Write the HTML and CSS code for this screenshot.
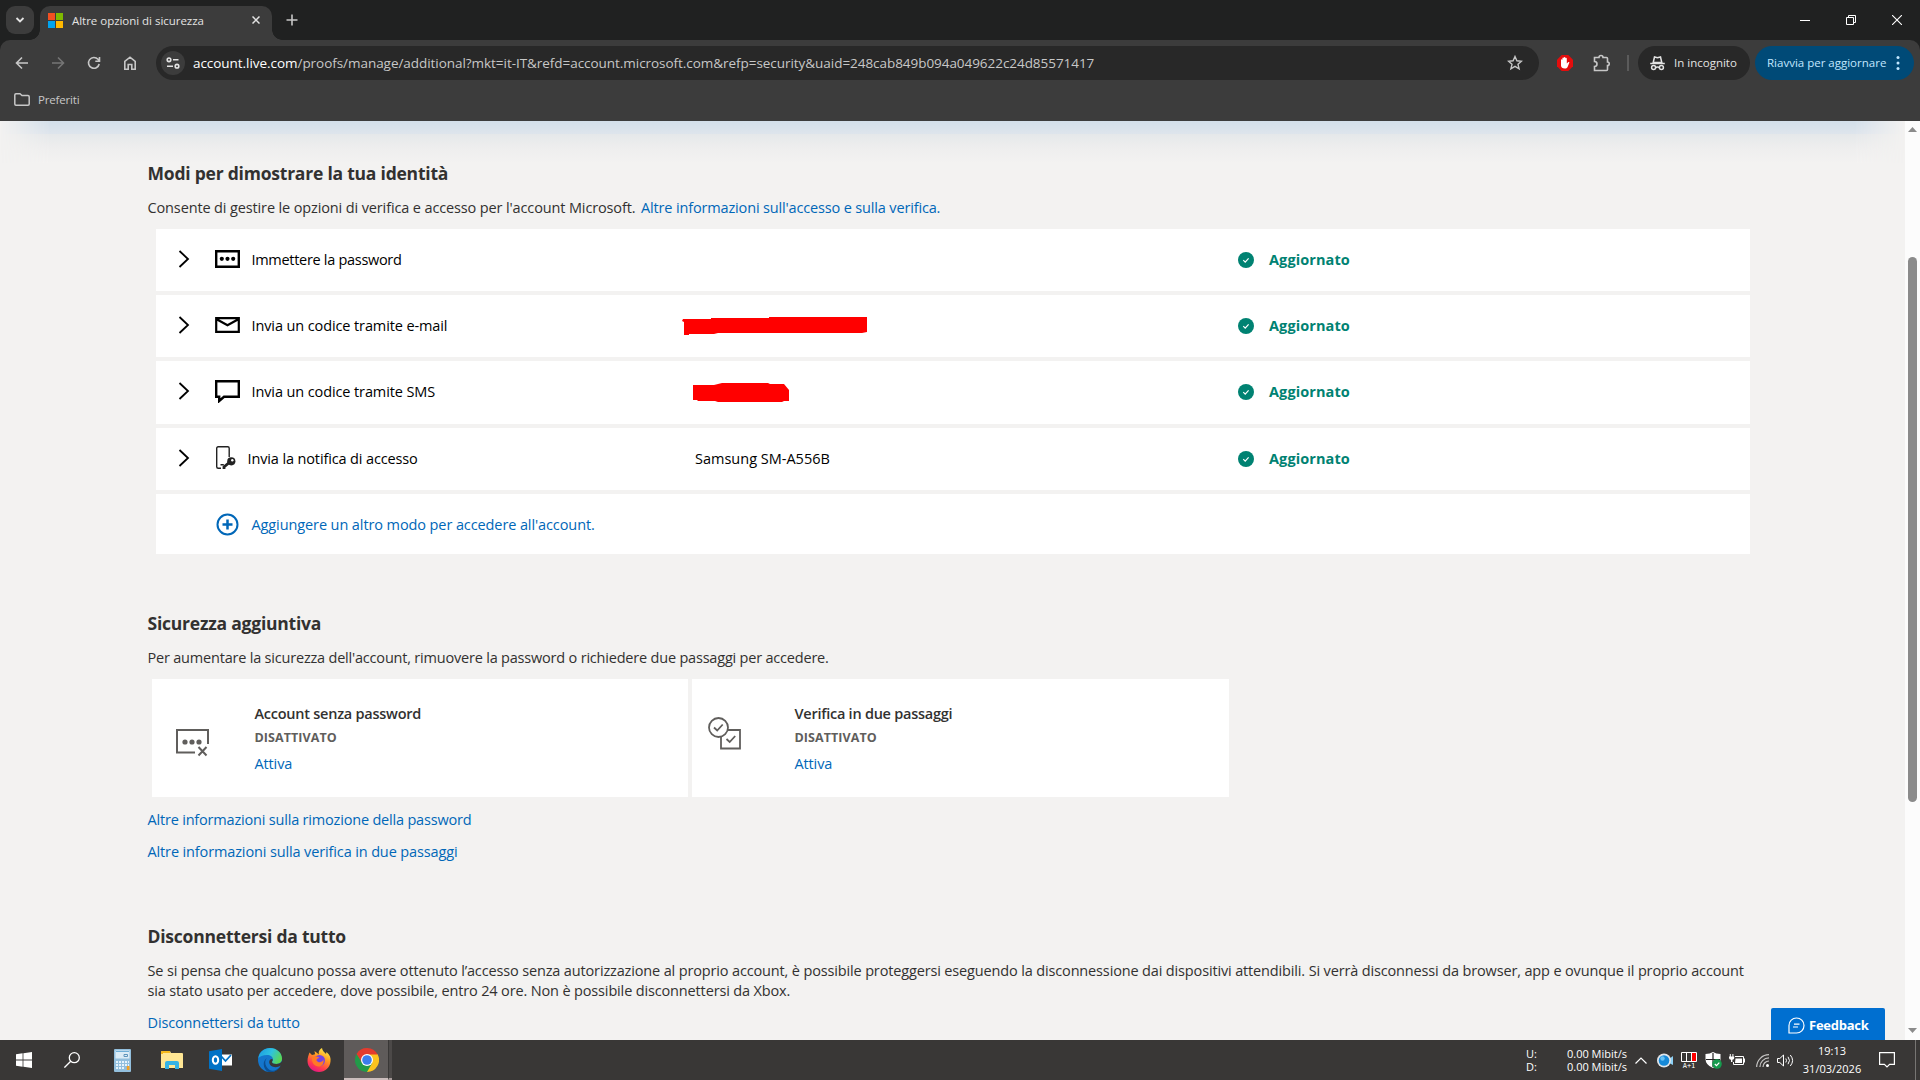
FILE: index.html
```html
<!DOCTYPE html>
<html lang="it">
<head>
<meta charset="utf-8">
<title>Altre opzioni di sicurezza</title>
<link rel="stylesheet" href="styles.css">
</head>
<body>
<header class="browser">
  <div class="tabstrip">
    <div class="tab-search"><svg width="10" height="10" viewBox="0 0 10 10"><path d="M1.5 3 5 6.5 8.500 3" fill="none" stroke="#e3e3e3" stroke-width="1.8"/></svg></div>
    <div class="tab">
      <svg class="favicon" width="15" height="15" viewBox="0 0 15 15"><path fill="#f25022" d="M0 0h7v7H0z"/><path fill="#7fba00" d="M8 0h7v7H8z"/><path fill="#00a4ef" d="M0 8h7v7H0z"/><path fill="#ffb900" d="M8 8h7v7H8z"/></svg>
      <span class="tab-title">Altre opzioni di sicurezza</span>
      <svg width="8" height="8" viewBox="0 0 8 8"><path d="M.5.5l7 7m0-7-7 7" stroke="#e3e3e3" stroke-width="1.5"/></svg>
    </div>
    <svg class="new-tab" width="12" height="12" viewBox="0 0 12 12"><path d="M6 .5v11M.5 6h11" stroke="#c7c7c7" stroke-width="1.6"/></svg>
    <div class="window-controls">
      <svg width="10" height="10" viewBox="0 0 10 10"><path d="M0 5.500h10" stroke="#fff"/></svg>
      <svg width="10" height="10" viewBox="0 0 10 10"><path d="M.5 2.500h7v7h-7zM2.500 2.500v-2h7v7h-2" fill="none" stroke="#fff"/></svg>
      <svg width="10" height="10" viewBox="0 0 10 10"><path d="M0 0l10 10M10 0 0 10" stroke="#fff" stroke-width="1.100"/></svg>
    </div>
  </div>
  <div class="toolbar">
    <div class="nav">
      <svg width="14" height="14" viewBox="0 0 14 14"><path d="M7 1.500 1.500 7 7 12.500M1.500 7H13" fill="none" stroke="#c7c7c7" stroke-width="1.600"/></svg>
      <svg width="14" height="14" viewBox="0 0 14 14"><path d="M7 1.500 12.500 7 7 12.500M12.500 7H1" fill="none" stroke="#757575" stroke-width="1.600"/></svg>
      <svg width="14" height="14" viewBox="0 0 14 14"><path d="M12.200 8A5.400 5.400 0 1 1 11 3.300L12.400 5M12.500 1v4.300H8.300" fill="none" stroke="#c7c7c7" stroke-width="1.600"/></svg>
      <svg width="14" height="14" viewBox="0 0 14 14"><path d="M1.800 13.200V5.500L7 1.200l5.200 4.300v7.700H8.800V8.500H5.200v4.700z" fill="none" stroke="#c7c7c7" stroke-width="1.600"/></svg>
    </div>
    <div class="omnibox">
      <div class="site-info"><svg width="14" height="12" viewBox="0 0 14 12"><g fill="none" stroke="#e3e3e3" stroke-width="1.600"><circle cx="3" cy="2.800" r="1.800"/><path d="M7 2.800h5.500M1 9.200h6"/><circle cx="11" cy="9.200" r="1.800"/></g></svg></div>
      <span class="url"><b>account.live.com</b>/proofs/manage/additional?mkt=it-IT&amp;refd=account.microsoft.com&amp;refp=security&amp;uaid=248cab849b094a049622c24d85571417</span>
      <svg width="16" height="16" viewBox="0 0 16 16"><path d="m8 1.500 1.900 4.300 4.600.4-3.500 3.100 1.100 4.600L8 11.400l-4.100 2.500L5 9.300 1.500 6.200l4.600-.4z" fill="none" stroke="#c7c7c7" stroke-width="1.400"/></svg>
    </div>
    <svg class="adblock" width="16" height="16" viewBox="0 0 16 16"><path d="M4.700 0h6.600L16 4.700v6.600L11.300 16H4.700L0 11.300V4.700z" fill="#e40d0d"/><path d="M4 8V5c0-.9 1.400-.9 1.400 0V3.200c0-.9 1.500-.9 1.500 0v-.6c0-.9 1.500-.9 1.500 0v.8c0-.9 1.400-.9 1.400 0V8.500l1.300-1.200c.8-.6 1.600 0 1.100.8L10.600 12c-.7 1.200-1.400 1.600-2.800 1.600C5.500 13.600 4 12.300 4 10.500z" fill="#fff"/></svg>
    <svg class="extensions" width="18" height="18" viewBox="0 0 18 18"><path d="M1.500 3.500H6a2 2 0 0 1 4 0h3.500q1 0 1 1V8a1.600 1.600 0 0 1 0 3.500v4q0 1-1 1h-12v-4a2.500 2.500 0 0 0 0-5z" fill="none" stroke="#c7c7c7" stroke-width="1.600"/></svg>
    <i class="divider"></i>
    <div class="pill incognito"><svg width="15" height="15" viewBox="0 0 15 15"><path d="M3.200 6.500 4.500 1l3 .8 3-.8 1.300 5.500z" fill="none" stroke="#e3e3e3" stroke-width="1.500"/><g fill="none" stroke="#e3e3e3" stroke-width="1.500"><path d="M.2 7.500h14.600M5.500 11.500q2-1 4 0"/><circle cx="3.600" cy="11.600" r="2"/><circle cx="11.400" cy="11.600" r="2"/></g></svg><span>In incognito</span></div>
    <div class="pill update"><span>Riavvia per aggiornare</span><svg width="4" height="16" viewBox="0 0 4 16" fill="#c2e7ff"><circle cx="2" cy="2.500" r="1.500"/><circle cx="2" cy="8" r="1.500"/><circle cx="2" cy="13.500" r="1.500"/></svg></div>
  </div>
  <div class="bookmarks"><svg width="16" height="13" viewBox="0 0 16 13"><path d="M.8 11V2q0-1.200 1.200-1.200h4l2 1.800h6q1.200 0 1.200 1.200V11q0 1.200-1.200 1.200H2Q.8 12.200.8 11z" fill="none" stroke="#c7c7c7" stroke-width="1.500"/></svg><span>Preferiti</span></div>
</header>

<div class="viewport">
  <main class="page">
    <h2>Modi per dimostrare la tua identità</h2>
    <p>Consente di gestire le opzioni di verifica e accesso per l'account Microsoft. <a class="more">Altre informazioni sull'accesso e sulla verifica.</a></p>

    <div class="proofs">
      <div class="proof">
        <svg class="chevron" width="12" height="18" viewBox="0 0 12 18"><path d="M1.500 1 10 9l-8.500 8"/></svg>
        <span class="label"><svg width="25" height="18" viewBox="0 0 25 18"><path d="M1.200 1.200h22.600v15.600H1.200z" fill="none" stroke="#000" stroke-width="2.400"/><circle cx="6.800" cy="8.800" r="2.100"/><circle cx="12.500" cy="8.800" r="2.100"/><circle cx="18.200" cy="8.800" r="2.100"/></svg><span class="snug">Immettere la password</span></span>
        <span class="value"></span>
        <span class="status"><svg width="16" height="16" viewBox="0 0 16 16"><circle cx="8" cy="8" r="8" fill="#008272"/><path d="m5.300 8.200 1.900 1.900 3.400-3.700" fill="none" stroke="#fff" stroke-width="1.200"/></svg>Aggiornato</span>
      </div>
      <div class="proof">
        <svg class="chevron" width="12" height="18" viewBox="0 0 12 18"><path d="M1.500 1 10 9l-8.500 8"/></svg>
        <span class="label"><svg width="25" height="16" viewBox="0 0 25 16"><path d="M1.200 1.200h22.600v13.600H1.200zM1.200 2l11.300 6.300L23.800 2" fill="none" stroke="#000" stroke-width="2.200"/></svg><span>Invia un codice tramite e-mail</span></span>
        <span class="value"><svg class="mark mark-mail" width="186" height="19" viewBox="0 0 186 19"><path d="M0 4l1-2h28V1h58V0h98v15l-5 1H36l-4 1H7v1H2V5z" fill="#f00"/></svg></span>
        <span class="status"><svg width="16" height="16" viewBox="0 0 16 16"><circle cx="8" cy="8" r="8" fill="#008272"/><path d="m5.300 8.200 1.900 1.900 3.400-3.700" fill="none" stroke="#fff" stroke-width="1.200"/></svg>Aggiornato</span>
      </div>
      <div class="proof tall">
        <svg class="chevron" width="12" height="18" viewBox="0 0 12 18"><path d="M1.500 1 10 9l-8.500 8"/></svg>
        <span class="label"><svg width="25" height="23" viewBox="0 0 25 23"><path d="M1.200 1.200h22.600v15.600H9L4.200 21v-4.200h-3z" fill="none" stroke="#000" stroke-width="2.400"/></svg><span>Invia un codice tramite SMS</span></span>
        <span class="value"><svg class="mark mark-sms" width="96" height="19" viewBox="0 0 96 19"><path d="M0 2h21l8-2h46l2 1h14l5 6v11h-5l-2 1H25l-3-1H5l-1-1H0z" fill="#f00"/></svg></span>
        <span class="status"><svg width="16" height="16" viewBox="0 0 16 16"><circle cx="8" cy="8" r="8" fill="#008272"/><path d="m5.300 8.200 1.900 1.900 3.400-3.700" fill="none" stroke="#fff" stroke-width="1.200"/></svg>Aggiornato</span>
      </div>
      <div class="proof">
        <svg class="chevron" width="12" height="18" viewBox="0 0 12 18"><path d="M1.500 1 10 9l-8.500 8"/></svg>
        <span class="label phone"><svg width="21" height="24" viewBox="0 0 21 24"><path d="M6 22.200H3.200Q1.700 22.200 1.700 20.700V2.200Q1.700.8 3.200.8h9.600Q14.200.8 14.200 2.200V11M5.500 18.800h3.300" fill="none" stroke="#222" stroke-width="1.400"/><path d="M15.800 15.300 9 21v2" fill="none" stroke="#222" stroke-width="2.800"/><circle cx="16.300" cy="15.300" r="4.100" fill="#222"/><circle cx="17.300" cy="14.300" r="1.200" fill="#fff"/></svg><span>Invia la notifica di accesso</span></span>
        <span class="value">Samsung SM-A556B</span>
        <span class="status"><svg width="16" height="16" viewBox="0 0 16 16"><circle cx="8" cy="8" r="8" fill="#008272"/><path d="m5.300 8.200 1.900 1.900 3.400-3.700" fill="none" stroke="#fff" stroke-width="1.200"/></svg>Aggiornato</span>
      </div>
      <div class="proof add">
        <span class="label"><svg width="25" height="23" viewBox="0 0 25 23"><g fill="none" stroke="#0067b8" stroke-width="2"><circle cx="12.500" cy="11.500" r="10"/><path d="M12.500 6.500v10M7.500 11.500h10" stroke-width="2.500"/></g></svg><a>Aggiungere un altro modo per accedere all'account.</a></span>
      </div>
    </div>

    <h2 class="extra">Sicurezza aggiuntiva</h2>
    <p class="intro">Per aumentare la sicurezza dell'account, rimuovere la password o richiedere due passaggi per accedere.</p>
    <div class="cards">
      <section class="card">
        <div class="card-icon no-password"><svg width="33" height="28" viewBox="0 0 33 28"><g fill="none" stroke="#605e5c" stroke-width="2"><path d="M19 23.500H1V1h31v14M22.500 18l8 8.500m0-8.500-8 8.500"/></g><g fill="#605e5c"><circle cx="9" cy="13" r="2.600"/><circle cx="16" cy="13" r="2.600"/><circle cx="23" cy="13" r="2.600"/></g></svg></div>
        <div class="card-text"><h3>Account senza password</h3><strong>DISATTIVATO</strong><a>Attiva</a></div>
      </section>
      <section class="card">
        <div class="card-icon two-step"><svg width="33" height="33" viewBox="0 0 33 33"><g fill="none" stroke="#605e5c" stroke-width="1.800"><circle cx="10.500" cy="10.500" r="9.500"/><path d="M13 20v11.500h19V13H20M6 10.500l3.200 3 5.500-6M18.500 22l3.200 3 5.500-6"/></g></svg></div>
        <div class="card-text"><h3>Verifica in due passaggi</h3><strong>DISATTIVATO</strong><a>Attiva</a></div>
      </section>
    </div>
    <p class="first-link"><a>Altre informazioni sulla rimozione della password</a></p>
    <p class="next-link"><a>Altre informazioni sulla verifica in due passaggi</a></p>

    <h2 class="signout">Disconnettersi da tutto</h2>
    <p class="long">Se si pensa che qualcuno possa avere ottenuto l’accesso senza autorizzazione al proprio account, è possibile proteggersi eseguendo la disconnessione dai dispositivi attendibili. Si verrà disconnessi da browser, app e ovunque il proprio account<br>sia stato usato per accedere, dove possibile, entro 24 ore. Non è possibile disconnettersi da Xbox.</p>
    <p class="next-link"><a>Disconnettersi da tutto</a></p>
  </main>
  <div class="scrollbar">
    <svg width="9" height="5" viewBox="0 0 9 5"><path d="M4.500 0 9 5H0z" fill="#8b8b8b"/></svg>
    <i class="thumb"></i>
    <svg width="9" height="5" viewBox="0 0 9 5"><path d="M0 0h9L4.500 5z" fill="#8b8b8b"/></svg>
  </div>
  <button class="feedback"><svg width="17" height="17" viewBox="0 0 17 17"><g fill="none" stroke="#fff" stroke-width="1.200"><path d="M1 16v-7.500A7.500 7.500 0 1 1 8.500 16zM6 7.200h5.500M5 10h5"/></g></svg>Feedback</button>
</div>

<footer class="taskbar">
  <div class="task"><svg width="16" height="16" viewBox="0 0 16 16" fill="#fff"><path d="M0 2.200 6.600 1.300v6.300H0zM7.400 1.200 16 0v7.600H7.400zM0 8.400h6.600v6.300L0 13.800zM7.400 8.400H16V16l-8.600-1.200z"/></svg></div>
  <div class="task search"><svg width="16" height="16" viewBox="0 0 16 16"><g fill="none" stroke="#fff" stroke-width="1.300"><circle cx="10.300" cy="5.700" r="5"/><path d="M6.700 9.300.4 15.600"/></g></svg></div>
  <div class="task app"><svg width="17" height="23" viewBox="0 0 17 23"><rect width="17" height="23" rx="1" fill="#93bfdd"/><path d="M1.500 1.500h14v8h-14z" fill="#dcecf6"/><path d="M2 2.500h13" stroke="#6faed6"/><path d="M10 5.500h3.500v2H10z" fill="none" stroke="#5e94bb"/><path d="M2 13h13M2 16h13M2 19h9" stroke="#e6f3fb" stroke-width="2" stroke-dasharray="2 1"/><path d="M12.800 17h2.700v4h-2.700z" fill="#f3a021"/></svg></div>
  <div class="task app"><svg width="22" height="18" viewBox="0 0 22 18"><path d="M0 1q0-1 1-1h8l1 2h11q1 0 1 1v14H0z" fill="#ffe694"/><path d="M0 1q0-1 1-1h8v2H2v1H0z" fill="#f5b91c"/><path d="M4 18v-6q0-2 2-2h10q2 0 2 2v6h-4v-4H8v4z" fill="#35b3e5"/></svg></div>
  <div class="task app"><svg width="23" height="22" viewBox="0 0 23 22"><path d="M11 5.500h12v11H11z" fill="#fff"/><path d="M12 7l4.500 5L22 6" fill="none" stroke="#0072c6" stroke-width="1.800"/><path d="M0 2.200 13 0v22L0 19.800z" fill="#0072c6"/><ellipse cx="6.500" cy="11" rx="2.700" ry="3.800" fill="none" stroke="#fff" stroke-width="2"/></svg></div>
  <div class="task app"><svg width="24" height="24" viewBox="0 0 24 24"><defs><linearGradient id="edgeTop" x1="0" x2="1" y1=".2" y2=".6"><stop stop-color="#1b9de2"/><stop offset=".5" stop-color="#2fc2df"/><stop offset="1" stop-color="#5bd84f"/></linearGradient></defs><circle cx="12" cy="12" r="12" fill="#1476cc"/><path d="M.3 10C1.500 3.800 6.200 0 12 0c7 0 12 5 12 10.600 0 3.400-2.300 5.400-5.600 5.400-3 0-4.400-1-4.400-2 0-.7 1-1.200 1-2.700C15 9 12.500 7 9 7 5 7 1.500 8.500.3 10z" fill="url(#edgeTop)"/><path d="M9 10c-3 3-2 8.500 2 11.500 3 2 7 2 11.300-3.200C20 23 15 25 10 23.700 5 21 4 13 9 10z" fill="#0b4f93"/><path d="M13.500 11c-3.300 1-3 5.600.8 7.500 3 1.300 6 .7 8.200-.7l1.500.2v-5c-1 2-3 3-5.600 3-3 0-4.400-1-4.400-2 0-.7 1-1.500.8-2.500z" fill="#393736"/></svg></div>
  <div class="task app"><svg width="24" height="24" viewBox="0 0 24 24"><defs><linearGradient id="fox" x1=".8" x2=".3" y1="0" y2="1"><stop stop-color="#fff44f"/><stop offset=".4" stop-color="#ff9a1f"/><stop offset=".75" stop-color="#ff3b4e"/><stop offset="1" stop-color="#e31587"/></linearGradient></defs><path d="M2.500 4.500 5 7l3-.8L7.500 3 12 6.500c-1-3 1-5.500 3-6.500.3 3 2 3.500 4 6l.5-2C23 7 24 10 23.500 13.500 23 19.500 18 24 12 24S.5 19.500.5 13c0-3.500 1-6 2-8.500z" fill="url(#fox)"/><circle cx="12.500" cy="12.500" r="5.500" fill="#7543e3"/><path d="M5 9.500c3-1.500 6-1 7.500.5-2 .3-3 1-3 2.500 2 3 5.500 2 7-1 .5 5-2 7-5 7-4 0-7-3.500-6.500-9z" fill="#ff7a25"/></svg></div>
  <div class="task app active"><svg width="24" height="24" viewBox="0 0 24 24"><path d="M12 12V6h10.400A12 12 0 0 1 12 24z" fill="#fcc31e"/><path d="M12 12 1.600 6A12 12 0 0 0 12 24l5.200-9z" fill="#229a49"/><path d="M12 6.500h10.600A12 12 0 0 0 1.600 6l5.600 9z" fill="#e33b2e"/><circle cx="12" cy="12" r="6" fill="#fff"/><circle cx="12" cy="12" r="4.800" fill="#3b7ded"/></svg></div>
  <i class="stack"></i>

  <div class="tray">
    <div class="net"><span>U:</span><span>0.00 Mibit/s</span><span>D:</span><span>0.00 Mibit/s</span></div>
    <svg class="caret" width="12" height="7" viewBox="0 0 12 7"><path d="M.5 6.500 6 1l5.500 5.500" fill="none" stroke="#fff" stroke-width="1.200"/></svg>
    <svg class="cam" width="16" height="15" viewBox="0 0 16 15"><path d="M12 6l4-3v9l-4-2z" fill="#8cd0f5"/><circle cx="7" cy="7.500" r="7" fill="#e1e5e9"/><circle cx="7" cy="7.500" r="5.300" fill="#1689d8"/><circle cx="5.500" cy="5.500" r="2.200" fill="#69c2f3"/></svg>
    <div class="caps"><svg width="16" height="10" viewBox="0 0 16 10"><path d="M.5.5h15v9H.5zM5.500.5v9M10.500.5v9" fill="none" stroke="#fff"/><path d="M11 1h4v8h-4z" fill="#f00"/></svg><span>A+1</span></div>
    <svg class="shield" width="17" height="17" viewBox="0 0 17 17"><path d="M8 0q3 2 7.500 2v5q0 6-7.500 9Q.5 13 .5 7V2Q5 2 8 0z" fill="#fff"/><path d="M8 1v14M1 7.500h14" stroke="#222" stroke-width="1.200"/><circle cx="12" cy="12" r="4.800" fill="#169b4e"/><path d="m9.800 12 1.700 1.600 2.800-3" fill="none" stroke="#fff" stroke-width="1.200"/></svg>
    <svg class="battery" width="16" height="12" viewBox="0 0 16 12"><path d="M6 2.500h8.500v8h-10V8" fill="none" stroke="#fff"/><path d="M6.500 4.500H13V9H6zM15 4.500h1v4h-1zM.8 0h1v2.500h1.600V0h1v2.500h.8V4q0 1.500-1.800 1.800V8H2V5.800Q0 5.500 0 4V2.500h.8z" fill="#fff"/></svg>
    <svg class="wifi" width="13" height="13" viewBox="0 0 13 13"><g fill="none" stroke="#c6c5c4" stroke-width="1.200"><path d="M.7 13A12.300 12.300 0 0 1 13 .7M3.900 13A9.100 9.100 0 0 1 13 3.900M7 13a6 6 0 0 1 6-6"/></g><circle cx="11.500" cy="11.500" r="1.500" fill="#fff"/></svg>
    <svg class="speaker" width="17" height="13" viewBox="0 0 17 13"><path d="M.5 4.500h2.300L6.500 1v11L2.800 8.500H.5zM8.800 4.500q1.400 2 0 4M11 2.800q3 3.700 0 7.400M13.300 1q4.600 5.500 0 11" fill="none" stroke="#fff"/></svg>
    <div class="clock"><span>19:13</span><span>31/03/2026</span></div>
    <svg class="notes" width="16" height="16" viewBox="0 0 16 16"><path d="M.6.600h14.800v11.800h-4.800L8 15l-2.600-2.600H.6z" fill="none" stroke="#fff" stroke-width="1.200"/></svg>
    <i class="peek"></i>
  </div>
</footer>
</body>
</html>
```
FILE: styles.css
```css
* { box-sizing: border-box; }
body {
  margin: 0;
  width: 1920px;
  height: 1080px;
  overflow: hidden;
  display: flex;
  flex-direction: column;
  font-family: "Open Sans", "Noto Sans", sans-serif;
}
svg { display: block; flex: none; }
i { flex: none; }
span, a, h2, h3, strong { white-space: nowrap; }

/* Browser chrome */
.browser { height: 121px; flex: none; background: #202121; color: #e3e3e3; font-size: 11.5px; }
.tabstrip { height: 40px; display: flex; align-items: center; padding-left: 6px; }
.tab-search { width: 28px; height: 28px; border-radius: 9px; background: #3c3c3c; display: grid; place-items: center; }
.tab {
  position: relative;
  align-self: flex-end;
  width: 232px; height: 34px; margin-left: 6px; padding: 0 12px 6px 8px;
  display: flex; align-items: center;
  background: #3c3c3c; border-radius: 10px 10px 0 0;
}
.tab::before, .tab::after { content: ""; position: absolute; bottom: 0; width: 10px; height: 10px; }
.tab::before { right: 100%; background: radial-gradient(circle at 0 0, transparent 9.5px, #3c3c3c 10px); }
.tab::after { left: 100%; background: radial-gradient(circle at 100% 0, transparent 9.5px, #3c3c3c 10px); }
.tab-title { flex: 1; margin-left: 9px; letter-spacing: -0.03px; }
.new-tab { margin-left: 14px; }
.window-controls { margin-left: auto; margin-right: 18px; display: flex; gap: 36px; }
.toolbar { height: 46px; background: #3c3c3c; border-radius: 10px 10px 0 0; display: flex; align-items: center; padding: 0 6px 0 15px; }
.nav { display: flex; gap: 22px; width: 141px; }
.omnibox { width: 1383px; height: 34px; border-radius: 17px; background: #282828; display: flex; align-items: center; padding: 0 16px 0 5px; }
.site-info { width: 24px; height: 24px; border-radius: 50%; background: #3c3c3c; display: grid; place-items: center; }
.url { flex: 1; margin-left: 8px; font-size: 13.5px; letter-spacing: -0.047px; color: #c7c7c7; }
.url b { font-weight: 400; color: #fff; }
.adblock { margin-left: 18px; }
.extensions { margin-left: 20px; }
.divider { width: 2px; height: 16px; margin-left: 16px; background: #5b5b5b; }
.pill { height: 34px; border-radius: 17px; display: flex; align-items: center; }
.pill span { margin-top: -1px; }
.incognito { width: 112px; margin-left: 9px; padding-left: 12px; gap: 9px; background: #282828; }
.update { width: 159px; margin-left: 5px; padding: 0 14px 0 12px; justify-content: space-between; background: #004a77; color: #c2e7ff; }
.bookmarks { height: 35px; background: #3c3c3c; padding: 0 0 8px 14px; display: flex; align-items: center; gap: 8px; color: #c7c7c7; letter-spacing: -0.17px; }

/* Account page */
.viewport { position: relative; height: 919px; flex: none; display: flex; background: #f3f2f1; }
.page {
  width: 1905px; height: 919px; overflow: hidden; padding: 40px 155px 0 147.5px;
  font-size: 14.5px; line-height: 20px; letter-spacing: -0.13px; color: #323130;
}
.page::before {
  content: ""; position: absolute; left: 0; top: 0; width: 1905px; height: 42px;
  background: linear-gradient(#d3dfea, #dee5ec 13px, #e5e8ea 13px, #eeeeee 27px, #f3f2f1);
  -webkit-mask-image: linear-gradient(90deg, transparent, #000 50px, #000 1855px, transparent);
  mask-image: linear-gradient(90deg, transparent, #000 50px, #000 1855px, transparent);
}
h2, h3, p { margin: 0; }
h2 { font-size: 17.5px; line-height: 24px; font-weight: 700; letter-spacing: -0.22px; }
p { margin-top: 13px; }
a { color: #0067b8; }
.more { margin-left: 2px; letter-spacing: -0.155px; }
.proofs { width: 1594px; margin: 11px 0 0 8.5px; display: flex; flex-direction: column; gap: 4px; color: #000; }
.proof { height: 62px; display: grid; grid-template-columns: 37px 480px 543px 1fr; align-items: center; padding-left: 22px; background: #fff; }
.proof.tall { height: 63px; padding-bottom: 1px; }
.proof.add { height: 60px; grid-template-columns: 1fr; padding: 2px 0 0 59px; }
.add .label { letter-spacing: -0.1px; }
.add .label > svg { margin-top: -1px; }
.chevron { fill: none; stroke: #000; stroke-width: 1.8; margin-top: -2px; }
.label { display: flex; align-items: center; gap: 11.5px; letter-spacing: -0.11px; }
.label > svg { margin-top: -2px; }
.label.phone { gap: 11.5px; letter-spacing: -0.13px; }
.snug { letter-spacing: -0.3px; }
.value { position: relative; letter-spacing: 0; }
.mark { position: absolute; }
.mark-mail { left: -13px; top: -9px; }
.mark-sms { left: -2px; top: -9px; }
.status { display: flex; align-items: center; gap: 15px; font-weight: 700; color: #008272; letter-spacing: 0.1px; }
.extra { margin-top: 57px; }
.intro { letter-spacing: -0.2px; }
.cards { display: flex; gap: 4px; margin: 11px 0 0 4.5px; }
.card { width: 536.5px; height: 118px; display: flex; background: #fff; }
.card:first-child { width: 536px; }
.card-icon { width: 102.5px; flex: none; }
.no-password { padding: 50px 0 0 23.5px; }
.two-step { padding: 38px 0 0 15.500px; }
.card-text { display: flex; flex-direction: column; padding-top: 24px; }
h3 { font-size: 14.5px; font-weight: 600; letter-spacing: -0.25px; line-height: 22px; }
.card-text strong { font-size: 12.5px; line-height: 25px; color: #605e5c; letter-spacing: 0.08px; }
.card-text a { line-height: 28px; }
.first-link { margin-top: 13px; letter-spacing: -0.19px; }
.next-link { margin-top: 12px; }
.signout { margin-top: 62px; }
.long { white-space: nowrap; letter-spacing: -0.148px; }
.scrollbar { width: 15px; height: 919px; background: #fcfcfc; display: flex; flex-direction: column; align-items: center; padding: 6px 0 7px; }
.thumb { width: 9px; height: 545px; margin: 125px 0 auto; border-radius: 5px; background: #8b8b8b; }
.feedback {
  position: absolute; right: 35px; bottom: 0; width: 114px; height: 32px; padding: 2px 0 0 17px;
  display: flex; align-items: center; gap: 4px; border: 0; border-radius: 2px 2px 0 0;
  background: #006fd0; color: #fff; font: 700 13px "Open Sans", sans-serif; letter-spacing: -0.25px;
}

/* Windows taskbar */
.taskbar { height: 40px; flex: none; display: flex; background: #393736; color: #fff; font-size: 11px; }
.task { width: 48px; display: grid; place-items: center; }
.task.search { margin-right: 2px; }
.task.app { width: 49px; }
.task.active { width: 44px; margin-left: 1px; padding: 2px 0 0 2px; background: #5f5b5a; border-bottom: 2px solid #cbbdbc; }
.stack { width: 4px; background: #4c4948; border-left: 1px solid #393736; border-bottom: 2px solid #a89c9b; }
.tray { margin-left: auto; display: flex; align-items: center; height: 40px; }
.net { width: 101px; display: grid; grid-template-columns: 41px 1fr; line-height: 13px; margin-right: 8px; }
.cam { margin-left: 10px; }
.caps { margin-left: 8px; padding-top: 2px; display: flex; flex-direction: column; align-items: center; width: 16px; font: 7px/8px "DejaVu Sans Mono", monospace; }
.shield { margin-left: 8px; }
.battery { margin-left: 7px; }
.wifi { margin-left: 11px; }
.speaker { margin-left: 8px; }
.clock { width: 60px; margin-left: 8px; display: flex; flex-direction: column; text-align: center; line-height: 18px; }
.notes { margin-left: 17px; }
.peek { width: 1px; height: 40px; margin: 0 4px 0 20px; background: #777573; }
```
